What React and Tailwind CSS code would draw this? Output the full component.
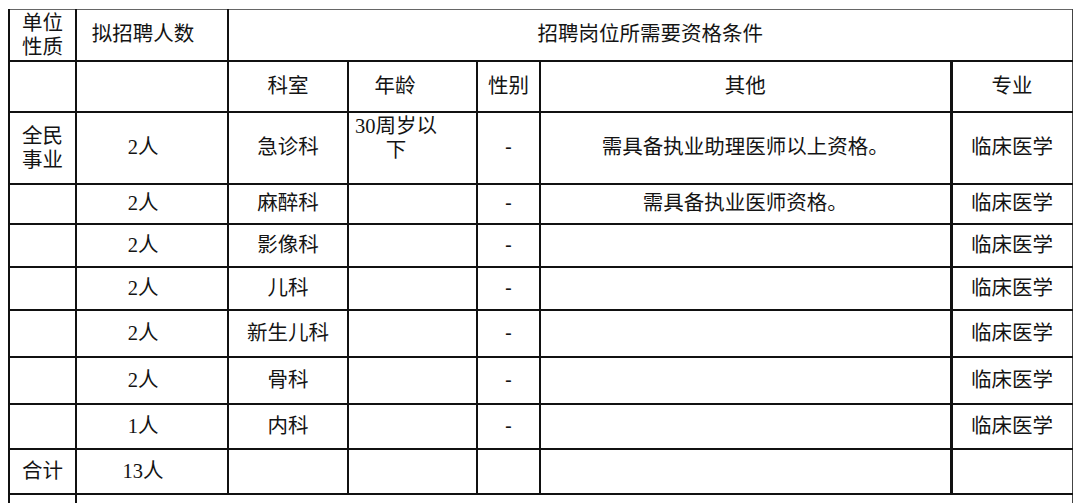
import React from "react";

function C({ children, className = "", ...rest }) {
  return (
    <td
      className={`border-2 border-[#111] text-center align-middle p-0 ${className}`}
      {...rest}
    >
      {children}
    </td>
  );
}

function Num({ children }) {
  return (
    <span className="font-['Liberation_Serif','Noto_Sans_CJK_SC',serif]">{children}</span>
  );
}

const rows = [
  { n: "2人", dept: "麻醉科", other: "需具备执业医师资格。", h: "h-[40px]" },
  { n: "2人", dept: "影像科", other: "", h: "h-[43px]" },
  { n: "2人", dept: "儿科", other: "", h: "h-[43px]" },
  { n: "2人", dept: "新生儿科", other: "", h: "h-[47px]" },
  { n: "2人", dept: "骨科", other: "", h: "h-[47px]" },
  { n: "1人", dept: "内科", other: "", h: "h-[45px]" },
];

export default function App() {
  return (
    <div className="w-[1080px] h-[503px] bg-white overflow-hidden pt-[9px] pl-[8px] text-[20.5px] text-[#141414] font-['Liberation_Sans','Noto_Sans_CJK_SC',sans-serif]">
      <table className="table-fixed border-collapse w-[1063px] border-t border-t-[#666] border-r border-r-[#444]">
        <colgroup>
          <col className="w-[67px]" />
          <col className="w-[152px]" />
          <col className="w-[120px]" />
          <col className="w-[129px]" />
          <col className="w-[63px]" />
          <col className="w-[411px]" />
          <col className="w-[121px]" />
        </colgroup>
        <tbody>
          <tr className="h-[51px]">
            <C className="border-t border-t-[#666] leading-[24px]">
              单位
              <br />
              性质
            </C>
            <C className="border-t border-t-[#666] pr-[18px]">拟招聘人数</C>
            <C colSpan={5} className="border-t border-t-[#666] border-r border-r-[#444]">
              招聘岗位所需要资格条件
            </C>
          </tr>
          <tr className="h-[51px]">
            <C></C>
            <C className="pr-[18px]"></C>
            <C>科室</C>
            <C className="pr-[35px]">年龄</C>
            <C>性别</C>
            <C className="border-r-[3px]">其他</C>
            <C className="border-r border-r-[#444]">专业</C>
          </tr>
          <tr className="h-[72px]">
            <C className="leading-[24px]">
              全民
              <br />
              事业
            </C>
            <C className="pr-[18px]">
              <Num>2人</Num>
            </C>
            <C>急诊科</C>
            <C className="align-top">
              <div className="w-[90px] ml-[2px] text-center leading-[23px] pt-[1px]">
                <Num>30</Num>周岁以下
              </div>
            </C>
            <C>-</C>
            <C className="border-r-[3px]">需具备执业助理医师以上资格。</C>
            <C className="border-r border-r-[#444]">临床医学</C>
          </tr>
          {rows.map((r, i) => (
            <tr key={i} className={r.h}>
              <C></C>
              <C className="pr-[18px]">
                <Num>{r.n}</Num>
              </C>
              <C>{r.dept}</C>
              <C></C>
              <C>-</C>
              <C className="border-r-[3px]">{r.other}</C>
              <C className="border-r border-r-[#444]">临床医学</C>
            </tr>
          ))}
          <tr className="h-[45px]">
            <C>合计</C>
            <C className="pr-[18px]">
              <Num>13人</Num>
            </C>
            <C></C>
            <C></C>
            <C></C>
            <C className="border-r-[3px]"></C>
            <C className="border-r border-r-[#444]"></C>
          </tr>
          <tr className="h-[40px]">
            <C></C>
            <C colSpan={6} className="border-r border-r-[#444]"></C>
          </tr>
        </tbody>
      </table>
    </div>
  );
}
